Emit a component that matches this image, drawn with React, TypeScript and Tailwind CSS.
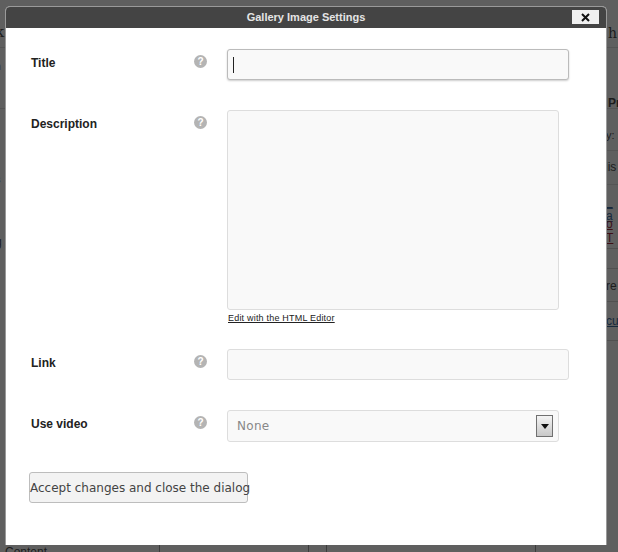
import { HelpCircle } from "lucide-react";

const serif = "font-['DejaVu_Serif',serif]";

function Help() {
  return (
    <div className="w-[13px] h-[13px] rounded-full bg-[#b4b4b4] flex items-center justify-center text-white text-[10px] font-bold leading-none font-['Liberation_Sans',sans-serif]">
      ?
    </div>
  );
}

function Label({ children }: { children: string }) {
  return (
    <div className="w-[163px] shrink-0 pt-px text-[12px] leading-[14px] font-bold text-[#222222]">
      {children}
    </div>
  );
}

// page behind the overlay, only the edges show past the dialog
function Backdrop() {
  return (
    <div className="absolute inset-0 overflow-hidden bg-[#5f5f5f] text-[#1c1c1c]">
      <div className="absolute left-0 top-[47px] w-full h-px bg-[#545454]" />
      <div className="absolute left-0 top-[108px] w-full h-px bg-[#545454]" />
      <div className="absolute right-0 top-[150px] w-3 h-px bg-[#555555]" />
      <div className="absolute right-0 top-[184px] w-3 h-px bg-[#555555]" />
      <div className="absolute right-0 top-[248px] w-3 h-px bg-[#505050]" />
      <div className="absolute right-0 top-[268px] w-3 h-px bg-[#505050]" />
      <div className="absolute right-0 top-[301px] w-3 h-px bg-[#505050]" />
      <div className="absolute right-0 top-[340px] w-3 h-px bg-[#505050]" />
      <div className={`absolute left-[-5px] top-[24px] text-[15px] leading-4 ${serif}`}>k</div>
      <div className="absolute left-[-5px] top-[60px] text-[11px] leading-3 text-[#3a3a3a]">h</div>
      <div className="absolute left-[-5px] top-[173px] text-[11px] leading-3">s</div>
      <div className="absolute left-[-5px] top-[236px] text-[12px] leading-3">g</div>
      <div className={`absolute left-[608px] top-[25px] text-[14px] leading-4 ${serif}`}>h</div>
      <div className="absolute left-[608px] top-[96px] text-[12px] leading-[14px] font-bold">Pr</div>
      <div className="absolute left-[606px] top-[128px] text-[11px] leading-[14px]">y:</div>
      <div className="absolute left-[605px] top-[160px] text-[12px] leading-[14px]">lis</div>
      <div className="absolute left-[606px] top-[195px] text-[12px] leading-[14px] text-[#16283c] underline">_ a</div>
      <div className="absolute left-[606px] top-[217px] text-[12px] leading-[14px] text-[#3d0f16] underline">o T</div>
      <div className="absolute left-[606px] top-[279px] text-[12px] leading-[14px]">re</div>
      <div className="absolute left-[606px] top-[314px] text-[12px] leading-[14px] text-[#16283c] underline">cur</div>
      <div className="absolute left-[5px] top-[545px] text-[12px] leading-[14px]">Content</div>
      <div className="absolute left-[159px] top-[545px] w-px h-[7px] bg-[#3c3c3c]" />
      <div className="absolute left-[308px] top-[545px] w-px h-[7px] bg-[#3c3c3c]" />
      <div className="absolute left-[326px] top-[545px] w-px h-[7px] bg-[#3c3c3c]" />
      <div className="absolute left-[535px] top-[545px] w-px h-[7px] bg-[#3c3c3c]" />
    </div>
  );
}

export default function App() {
  return (
    <div className="relative w-[618px] h-[552px] overflow-hidden font-['Liberation_Sans',sans-serif]">
      <Backdrop />
      <div className="relative ml-[5px] mt-[6px] w-[602px] h-[539px] float-left rounded-t-[5px] border-t border-x border-[#9a9a9a] bg-white flex flex-col">
        <div className="h-[21px] shrink-0 rounded-t-[4px] bg-[#444444] relative flex items-center justify-center">
          <span className="text-[11px] font-bold text-[#e4e4e4]">Gallery Image Settings</span>
          <button className="absolute right-[7px] top-[3px] w-[27px] h-[14px] bg-[#f0f0f0] flex items-center justify-center">
            <svg width="9" height="9" viewBox="0 0 9 9">
              <path d="M1 1 L8 8 M8 1 L1 8" stroke="#111111" strokeWidth="2" />
            </svg>
          </button>
        </div>

        <div className="pl-[25px] pt-[21px] flex-1 flex flex-col">
          <div className="flex">
            <div className="flex w-[196px] shrink-0 pt-[6px]">
              <Label>Title</Label>
              <Help />
            </div>
            <div className="w-[342px] h-[31px] rounded-[3px] border border-[#bbbbbb] bg-[#f9f9f9] shadow-[0_1px_2px_rgba(0,0,0,0.2)] flex items-center pl-[5px]">
              <div className="w-px h-[16px] bg-[#222222]" />
            </div>
          </div>

          <div className="flex mt-[30px]">
            <div className="flex w-[196px] shrink-0 pt-[6px]">
              <Label>Description</Label>
              <Help />
            </div>
            <div>
              <div className="w-[332px] h-[200px] rounded-[3px] border border-[#dddddd] bg-[#f9f9f9]" />
              <a className="block mt-[2px] ml-px text-[9px] leading-[12px] text-[#222222] underline tracking-[0.2px]">
                Edit with the HTML Editor
              </a>
            </div>
          </div>

          <div className="flex mt-[25px]">
            <div className="flex w-[196px] shrink-0 pt-[6px]">
              <Label>Link</Label>
              <Help />
            </div>
            <div className="w-[342px] h-[31px] rounded-[3px] border border-[#dddddd] bg-[#f9f9f9]" />
          </div>

          <div className="flex mt-[30px]">
            <div className="flex w-[196px] shrink-0 pt-[6px]">
              <Label>Use video</Label>
              <Help />
            </div>
            <div className="w-[332px] h-[32px] rounded-[3px] border border-[#dddddd] bg-[#f9f9f9] flex items-center justify-between pl-[9px] pr-[5px]">
              <span className="text-[12px] text-[#888888] tracking-[0.3px] font-['DejaVu_Sans',sans-serif]">None</span>
              <div className="w-[17px] h-[22px] border border-[#707070] bg-gradient-to-b from-[#f4f4f4] to-[#c8c8c8] flex items-center justify-center">
                <svg width="8" height="5" viewBox="0 0 8 5">
                  <path d="M0 0 H8 L4 5 Z" fill="#111111" />
                </svg>
              </div>
            </div>
          </div>

          <button className="mt-[30px] -ml-[2px] self-start w-[219px] h-[31px] rounded-[3px] border border-[#bdbdbd] bg-[#f3f3f3] text-[12px] text-[#444444] font-['DejaVu_Sans',sans-serif] whitespace-nowrap">
            Accept changes and close the dialog
          </button>
        </div>
      </div>
    </div>
  );
}
